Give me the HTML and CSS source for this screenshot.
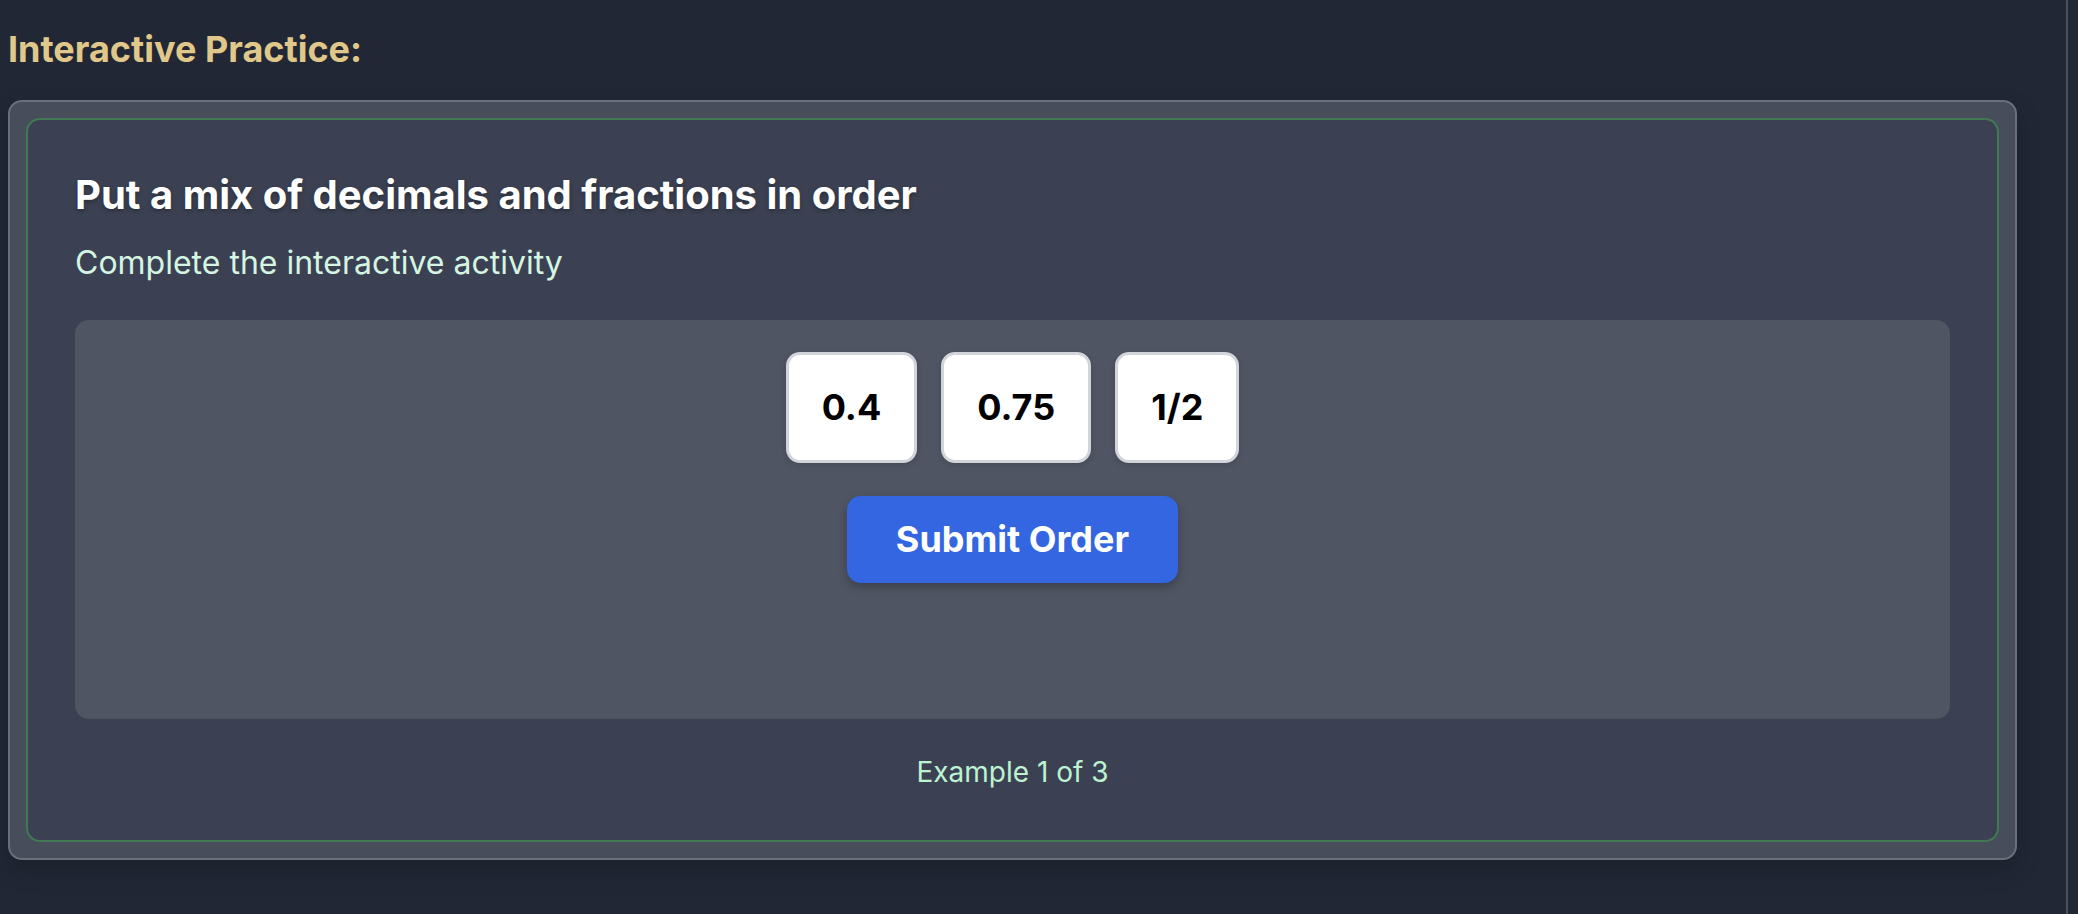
FILE: index.html
```html
<!DOCTYPE html>
<html lang="en">
<head>
<meta charset="utf-8">
<title>Interactive Practice</title>
<link rel="stylesheet" href="styles.css">
</head>
<body>
<div class="page">
  <main class="main">
    <h2 class="section-title">Interactive Practice:</h2>
    <section class="outer-card">
      <div class="inner-card">
        <h3 class="card-title">Put a mix of decimals and fractions in order</h3>
        <p class="card-subtitle">Complete the interactive activity</p>
        <div class="activity">
          <div class="tiles">
            <div class="tile">0.4</div>
            <div class="tile">0.75</div>
            <div class="tile">1/2</div>
          </div>
          <button class="submit-btn" type="button">Submit Order</button>
        </div>
        <p class="counter">Example 1 of 3</p>
      </div>
    </section>
  </main>
  <div class="gutter"></div>
</div>
</body>
</html>
```
FILE: styles.css
```css
* {
  box-sizing: border-box;
}

html, body {
  margin: 0;
  padding: 0;
  height: 100%;
}

body {
  background: #212735;
  font-family: Inter, "Noto Sans", "Liberation Sans", sans-serif;
  color: #ffffff;
}

.page {
  display: flex;
  min-height: 914px;
}

.main {
  flex: 1;
  padding: 0 49px 0 8px;
}

.gutter {
  width: 12px;
  border-left: 2px solid #4a5060;
}

.section-title {
  margin: 21px 0 23px 0;
  font-size: 36px;
  line-height: 56px;
  font-weight: 700;
  color: #e0c88a;
}

.outer-card {
  background: #474d5b;
  border: 2px solid #6a6f7c;
  border-radius: 14px;
  padding: 16px;
  box-shadow: 0 10px 24px rgba(0, 0, 0, 0.18);
}

.inner-card {
  background: #3b4152;
  border: 2px solid #417a50;
  border-radius: 14px;
  padding: 47px;
}

.card-title {
  margin: 0;
  font-size: 40px;
  line-height: 56px;
  font-weight: 700;
  color: #ffffff;
  text-shadow: 0 2px 4px rgba(0, 0, 0, 0.3);
}

.card-subtitle {
  margin: 16px 0 33px 0;
  font-size: 32px;
  line-height: 48px;
  color: #d5f5e3;
}

.activity {
  background: #4f5563;
  border-radius: 14px;
  min-height: 399px;
  padding: 32px 16px;
  display: flex;
  flex-direction: column;
  align-items: center;
  gap: 33px;
}

.tiles {
  display: flex;
  gap: 24px;
}

.tile {
  background: #ffffff;
  border: 3px solid #d1d5db;
  border-radius: 14px;
  padding: 24px 33px;
  font-size: 36px;
  line-height: 57px;
  font-weight: 700;
  color: #000000;
  box-shadow: 0 2px 6px rgba(0, 0, 0, 0.15);
}

.submit-btn {
  background: #3366e0;
  border: none;
  border-radius: 14px;
  padding: 16px 49px;
  font-family: inherit;
  font-size: 36px;
  line-height: 55px;
  font-weight: 700;
  color: #ffffff;
  box-shadow: 0 4px 10px rgba(0, 0, 0, 0.25);
}

.counter {
  margin: 32px 0 0 0;
  text-align: center;
  font-size: 28px;
  line-height: 42px;
  color: #bdf2d2;
}
```
